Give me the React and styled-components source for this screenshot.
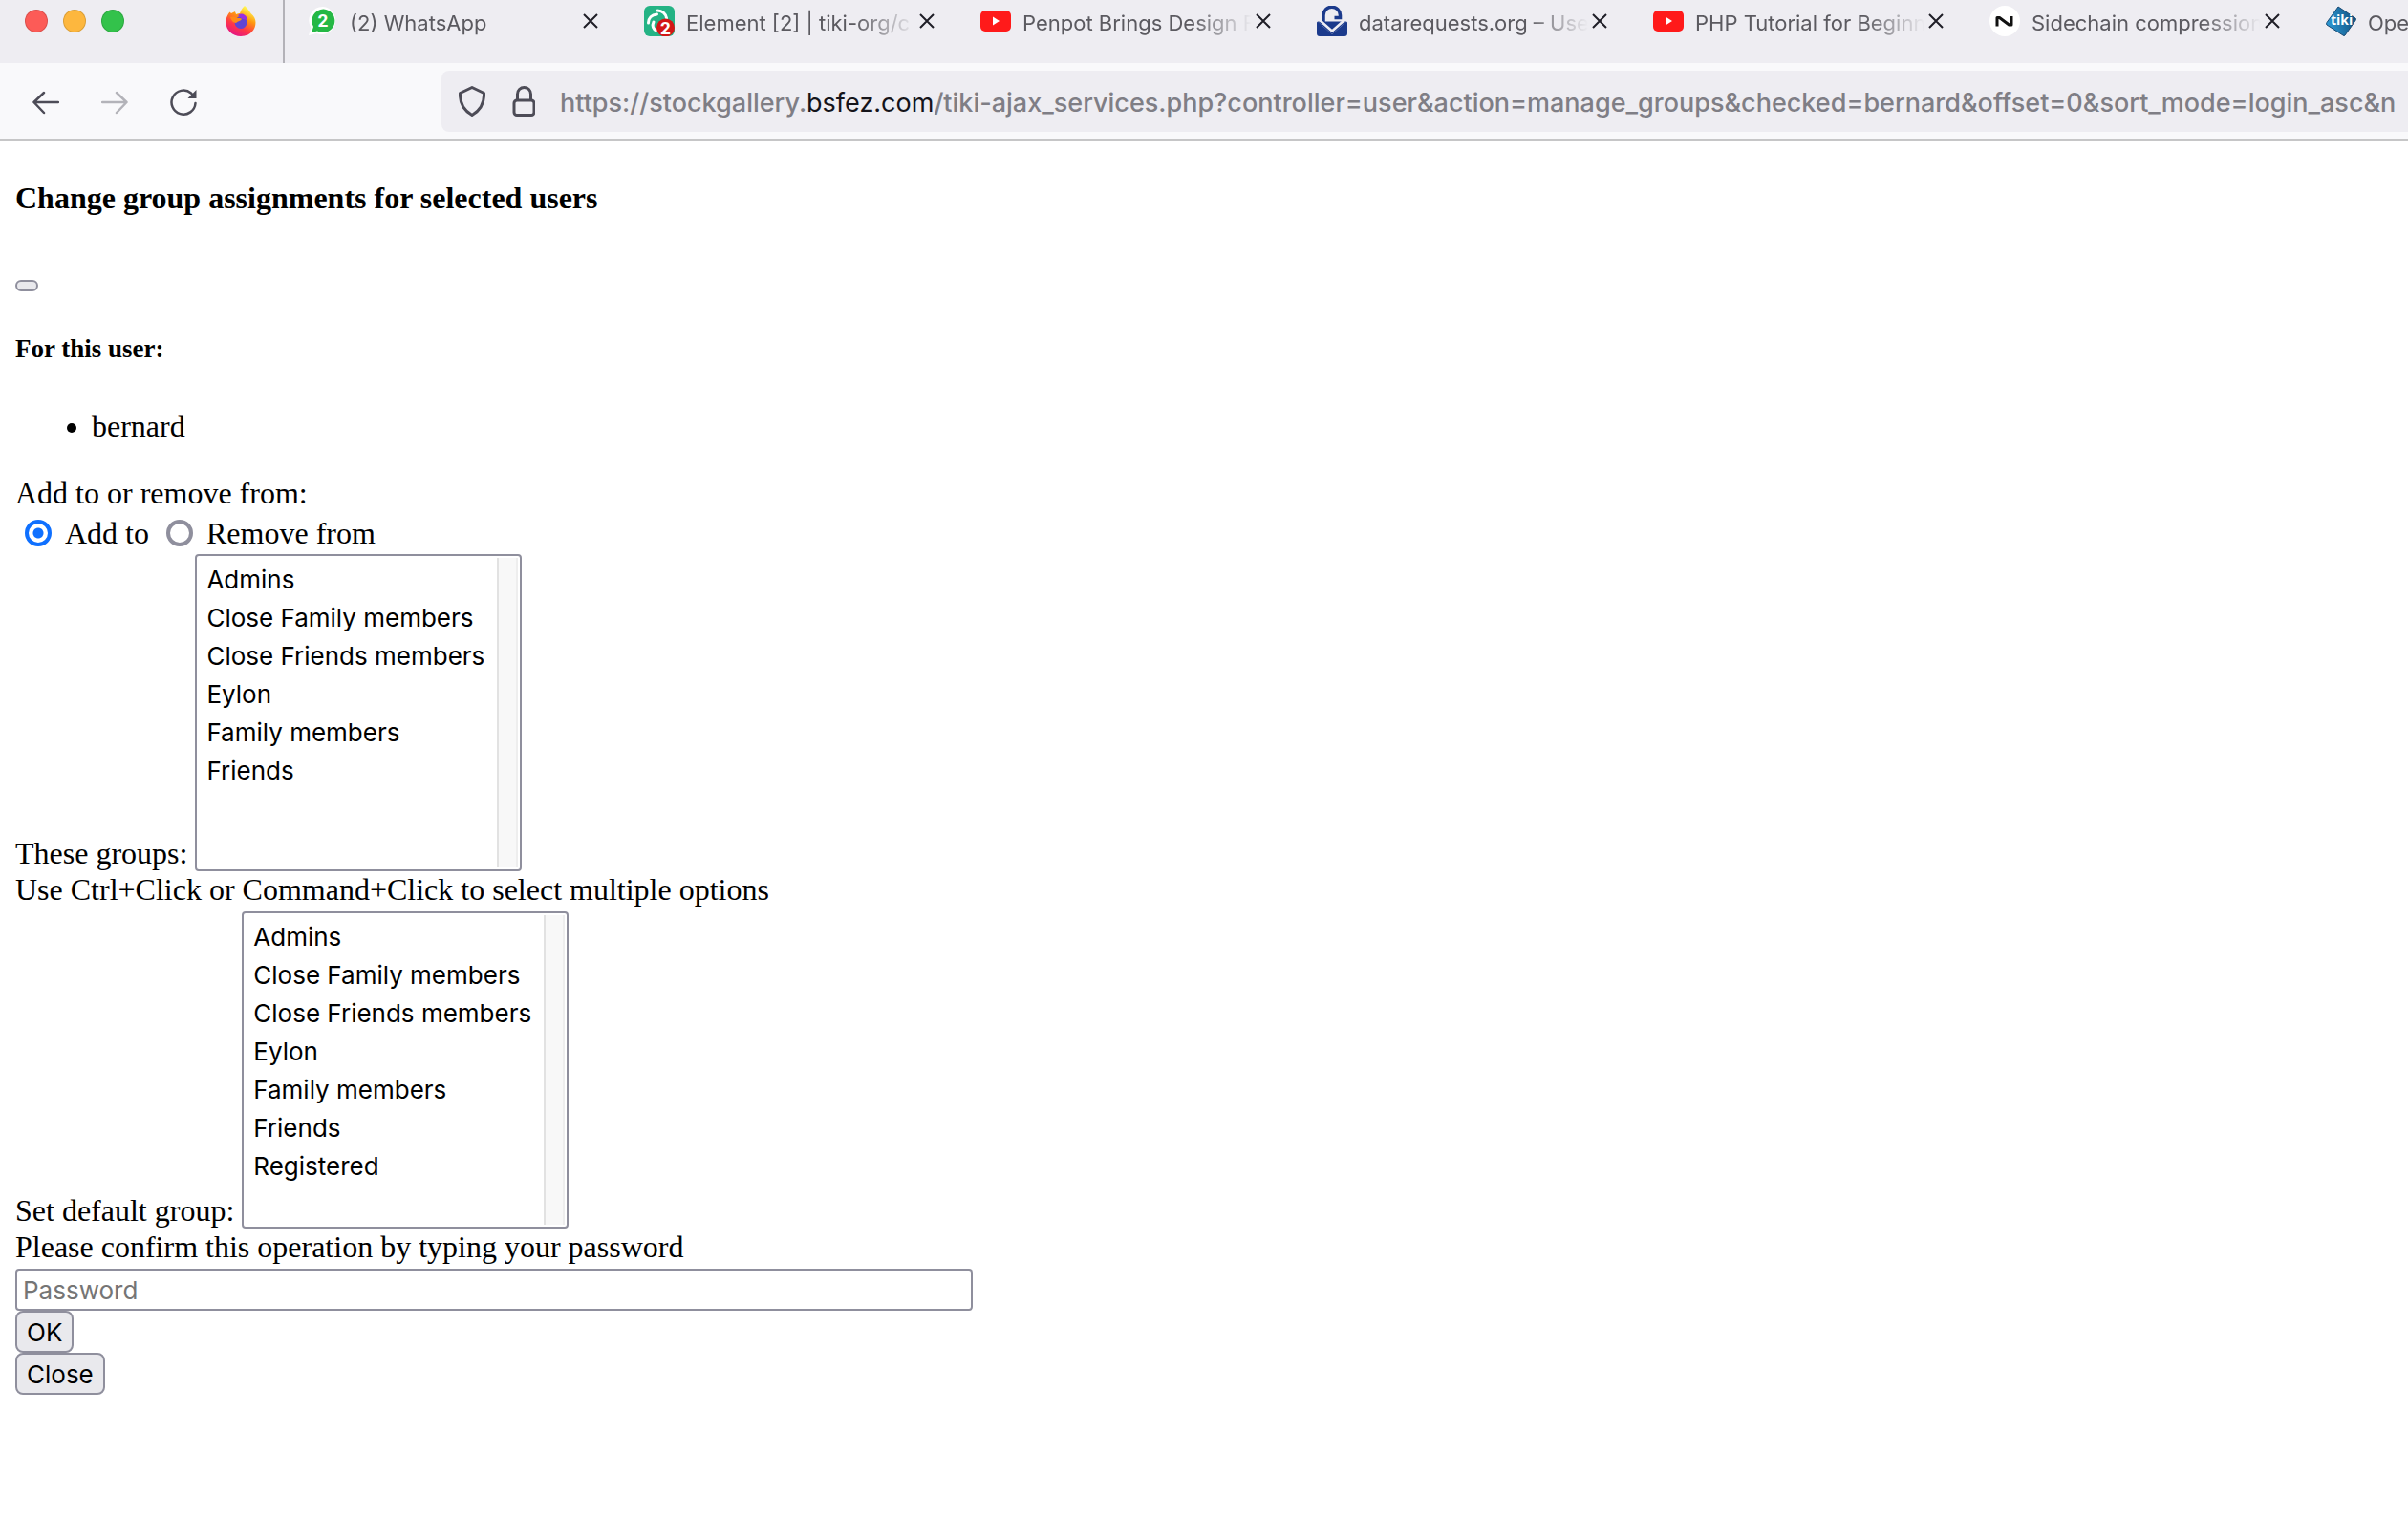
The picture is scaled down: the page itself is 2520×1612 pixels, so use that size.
import React, { useState } from "react";
import styled, { createGlobalStyle } from "styled-components";

const groups = [
  "Admins",
  "Close Family members",
  "Close Friends members",
  "Eylon",
  "Family members",
  "Friends",
];

const YoutubeIcon = () => (
  <Favicon viewBox="0 0 32 32">
    <rect y="5" width="32" height="22" rx="5" fill="#ff1a1a" />
    <path d="M13 11.500v9l7-4.500z" fill="#fff" />
  </Favicon>
);

const WhatsAppIcon = () => (
  <Favicon viewBox="0 0 32 32">
    <path
      d="M16 1A14.500 14.500 0 0 0 3.500 23L1 31l8.500-2A14.500 14.500 0 1 0 16 1z"
      fill="#fff"
    />
    <path
      d="M16.500 3.500A12.300 12.300 0 0 0 6 22L4 28l6-1.500A12.300 12.300 0 1 0 16.500 3.500z"
      fill="#25b845"
    />
    <Badge x="16" y="22">
      2
    </Badge>
  </Favicon>
);

const ElementIcon = () => (
  <Favicon viewBox="0 0 32 32">
    <rect width="32" height="32" rx="6" fill="#24b385" />
    <g fill="none" stroke="#fff" strokeWidth="3" strokeLinecap="round">
      <path d="M14 5c5 0 9 3.500 9.500 8" />
      <path d="M4.500 18c0-5 3.500-8.500 9-9" />
      <path d="M13 26c-3.500-1.500-5-5-3-9" />
    </g>
    <circle cx="22.500" cy="23" r="9.500" fill="#d31616" />
    <Badge x="22.500" y="30">
      2
    </Badge>
  </Favicon>
);

const PadlockIcon = () => (
  <Favicon viewBox="0 0 32 32">
    <path
      d="M7 20V10a8.500 8.500 0 0 1 17.500 0v2.500h-6"
      fill="none"
      stroke="#1b3a8c"
      strokeWidth="3.500"
    />
    <path
      d="M1 16.500L16 30l15-13.500 1 1V29a3 3 0 0 1-3 3H3a3 3 0 0 1-3-3V17.500z"
      fill="#1b3a8c"
    />
    <path d="M1 16.500h30L16 30z" fill="#1b3a8c" />
    <path d="M3 15l13 11.500L29 15" fill="none" stroke="#eeedf2" strokeWidth="2.500" />
  </Favicon>
);

const NativeIcon = () => (
  <Favicon viewBox="0 0 32 32">
    <circle cx="16" cy="16" r="16" fill="#fff" />
    <path
      d="M8 21.500V12.500h2.500l10 7.500H23v-9"
      fill="none"
      stroke="#111"
      strokeWidth="3"
      strokeLinejoin="round"
    />
  </Favicon>
);

const TikiIcon = () => (
  <Favicon viewBox="0 0 32 32">
    <defs>
      <linearGradient id="tiki" x1="0" y1="0.600" x2="1" y2="0.400">
        <stop offset="0" stopColor="#2d9ad6" />
        <stop offset="1" stopColor="#12517f" />
      </linearGradient>
    </defs>
    <path
      d="M13 1l18 12q1 1 0 2.500L20 31q-1 1-2 0L1 20q-1-1 0-2.500z"
      fill="url(#tiki)"
      stroke="#1a4a73"
      strokeWidth="1"
    />
    <TikiText x="5" y="20">
      tiki
    </TikiText>
  </Favicon>
);

const FirefoxIcon = () => (
  <Favicon viewBox="0 0 32 32">
    <defs>
      <linearGradient id="ff" x1="0.800" y1="0" x2="0.300" y2="1">
        <stop offset="0.100" stopColor="#fff44f" />
        <stop offset="0.400" stopColor="#ff980e" />
        <stop offset="0.700" stopColor="#ff3647" />
        <stop offset="1" stopColor="#e31587" />
      </linearGradient>
    </defs>
    <path
      d="M20 0c3 3 5 5 6.500 8 3.500 3 5 6 5 9.500C31.500 26 25 32 16 32S.5 25.500.5 17.500C.5 12 2.500 9 4.500 6.500L6 8l4-2c0 1 1 2 1 3 2-1 3-1 4-1 1-3 2-5 5-8z"
      fill="url(#ff)"
    />
    <circle cx="16" cy="17.500" r="6.500" fill="#5f45d2" />
    <path d="M13 10c4-3 9-1 10 5l-5-1z" fill="#9a2fe0" />
    <path d="M5 12c3-1 6 0 8 1 2 0 4 0 4 1-1 2-4 2-6 4-3 0-5-3-6-6z" fill="#ff8a16" />
  </Favicon>
);

const tabs = [
  { title: "(2) WhatsApp", Icon: WhatsAppIcon },
  { title: "Element [2] | tiki-org/c", Icon: ElementIcon },
  { title: "Penpot Brings Design F", Icon: YoutubeIcon },
  { title: "datarequests.org – Use", Icon: PadlockIcon },
  { title: "PHP Tutorial for Beginn", Icon: YoutubeIcon },
  { title: "Sidechain compression", Icon: NativeIcon },
  { title: "Ope", Icon: TikiIcon },
];

const GroupSelect = ({ id, label, options, value, onChange }) => (
  <SelectRow>
    <label htmlFor={id}>{label}</label>
    <ListBox id={id} multiple size={8} value={value} onChange={onChange}>
      {options.map((it) => (
        <option key={it}>{it}</option>
      ))}
    </ListBox>
  </SelectRow>
);

const selectedValues = (e) =>
  Array.from(e.target.selectedOptions).map((o) => o.value);

export default () => {
  const [mode, setMode] = useState("add");
  const [picked, setPicked] = useState([]);
  const [defaultGroup, setDefaultGroup] = useState([]);

  return (
    <>
      <GlobalStyle />
      <TabStrip>
        <WindowControls>
          <Light color="#fc5b57" />
          <Light color="#fdb73e" />
          <Light color="#33c24b" />
        </WindowControls>
        <PinnedTab>
          <FirefoxIcon />
        </PinnedTab>
        <Tabs>
          {tabs.map(({ title, Icon }) => (
            <Tab key={title}>
              <Icon />
              <TabTitle>{title}</TabTitle>
              <TabClose aria-label={"Close " + title}>
                <svg viewBox="0 0 16 16" width="16" height="16">
                  <path d="M1 1l14 14M15 1L1 15" stroke="#1f1e27" strokeWidth="2" />
                </svg>
              </TabClose>
            </Tab>
          ))}
        </Tabs>
      </TabStrip>
      <Toolbar>
        <NavButton aria-label="Back">
          <svg viewBox="0 0 28 28">
            <path d="M27 14H2M12 4L1.500 14 12 25" />
          </svg>
        </NavButton>
        <NavButton aria-label="Forward" disabled>
          <svg viewBox="0 0 28 28">
            <path d="M1 14h25M16 4l10.500 10L16 25" />
          </svg>
        </NavButton>
        <NavButton aria-label="Reload">
          <svg viewBox="0 0 28 28">
            <path d="M26.500 15A12.500 12.500 0 1 1 22 4.500l2 2.500" />
            <path d="M27.500 1v9h-9z" fill="#4d4c57" stroke="none" />
          </svg>
        </NavButton>
        <UrlBar>
          <UrlIcon width="28" viewBox="0 0 28 32">
            <path d="M14 1.500L26.500 7.500C27 18 22 26 14 30.500 6 26 1 18 1.500 7.500z" />
          </UrlIcon>
          <UrlIcon width="26" viewBox="0 0 26 32">
            <rect x="4" y="15" width="21" height="15.500" rx="3" />
            <path d="M7.500 15V8.500a7 7 0 0 1 14 0V15" />
          </UrlIcon>
          <Url>
            https://stockgallery.<b>bsfez.com</b>
            /tiki-ajax_services.php?controller=user&amp;action=manage_groups&amp;checked=bernard&amp;offset=0&amp;sort_mode=login_asc&amp;n
          </Url>
        </UrlBar>
      </Toolbar>
      <Page>
        <Title>Change group assignments for selected users</Title>
        <EmptyButton type="button" aria-label="Dismiss" />
        <Subtitle>For this user:</Subtitle>
        <UserList>
          <li>bernard</li>
        </UserList>
        <form onSubmit={(e) => e.preventDefault()}>
          <div>Add to or remove from:</div>
          <RadioRow>
            <RadioLabel>
              <Radio
                name="mode"
                checked={mode === "add"}
                onChange={() => setMode("add")}
              />
              Add to
            </RadioLabel>
            <RadioLabel>
              <Radio
                name="mode"
                checked={mode === "remove"}
                onChange={() => setMode("remove")}
              />
              Remove from
            </RadioLabel>
          </RadioRow>
          <GroupSelect
            id="groups"
            label="These groups:"
            options={groups}
            value={picked}
            onChange={(e) => setPicked(selectedValues(e))}
          />
          <Hint>Use Ctrl+Click or Command+Click to select multiple options</Hint>
          <GroupSelect
            id="default-group"
            label="Set default group:"
            options={[...groups, "Registered"]}
            value={defaultGroup}
            onChange={(e) => setDefaultGroup(selectedValues(e))}
          />
          <Hint as="label" htmlFor="password">
            Please confirm this operation by typing your password
          </Hint>
          <Password id="password" placeholder="Password" />
          <Button type="submit">OK</Button>
        </form>
        <Button type="button">Close</Button>
      </Page>
    </>
  );
};

const GlobalStyle = createGlobalStyle`
  * {
    box-sizing: border-box;
  }
  body {
    margin: 0;
    background-color: #fff;
  }
  button {
    cursor: pointer;
  }
`;

const TabStrip = styled.header`
  display: flex;
  height: 66px;
  overflow: hidden;
  background-color: #eeedf2;
`;

const WindowControls = styled.div`
  display: flex;
  gap: 16px;
  padding: 10px 0 0 26px;
`;

const Light = styled.span`
  width: 24px;
  height: 24px;
  border: 1px solid #0002;
  border-radius: 50%;
  background-color: ${(props) => props.color};
`;

const PinnedTab = styled.div`
  padding: 6px 28px 0 106px;
  border-right: 2px solid #b3b2b8;
`;

const Tabs = styled.div`
  display: flex;
  padding-left: 24px;
`;

const Tab = styled.div`
  display: flex;
  flex: none;
  align-items: center;
  width: 352px;
  height: 44px;
  padding-right: 48px;
`;

const Favicon = styled.svg`
  display: block;
  flex: none;
  width: 32px;
  height: 32px;
`;

const Badge = styled.text`
  fill: #fff;
  font-family: Roboto, sans-serif;
  font-size: 19px;
  font-weight: 700;
  text-anchor: middle;
`;

const TikiText = styled.text`
  fill: #fff;
  font-family: "Open Sans", sans-serif;
  font-size: 14px;
  font-weight: 700;
`;

const TabTitle = styled.span`
  flex: 1;
  margin: 4px 4px 0 12px;
  overflow: hidden;
  color: #5b5a60;
  font-family: Inter, sans-serif;
  font-size: 22px;
  line-height: 28px;
  white-space: nowrap;
  mask-image: linear-gradient(to left, transparent, #000 64px);
`;

const TabClose = styled.button`
  display: flex;
  padding: 0;
  border: 0;
  background: none;
`;

const Toolbar = styled.nav`
  display: flex;
  align-items: center;
  height: 82px;
  padding-left: 34px;
  border-bottom: 2px solid #c6c6c7;
  background-color: #f9f9fb;
`;

const NavButton = styled.button`
  width: 28px;
  height: 28px;
  margin: 2px 44px 0 0;
  padding: 0;
  border: 0;
  background: none;
  opacity: ${(props) => (props.disabled ? 0.4 : 1)};

  svg {
    display: block;
    fill: none;
    stroke: #4d4c57;
    stroke-width: 2.5;
    stroke-linecap: round;
    stroke-linejoin: round;
  }
`;

const UrlBar = styled.div`
  display: flex;
  flex: 1;
  align-items: center;
  min-width: 0;
  height: 64px;
  margin-left: 212px;
  padding-left: 18px;
  overflow: hidden;
  border-radius: 8px 0 0 8px;
  background-color: #eeedf2;
`;

const UrlIcon = styled.svg`
  flex: none;
  height: 32px;
  margin-right: 26px;
  fill: none;
  stroke: #4d4c57;
  stroke-width: 3;
  stroke-linejoin: round;
`;

const Url = styled.span`
  margin-top: 4px;
  color: #7f7e85;
  font-family: Inter, sans-serif;
  font-size: 27px;
  font-weight: 500;
  line-height: 36px;
  white-space: nowrap;

  b {
    color: #15141a;
    font-weight: 400;
  }
`;

const Page = styled.main`
  padding: 41px 16px;
  color: #000;
  font-family: "Liberation Serif", serif;
  font-size: 32px;
  line-height: 38px;
`;

const Title = styled.h4`
  margin: 0 0 68px;
  font-size: 32px;
  line-height: 36px;
`;

const Subtitle = styled.h5`
  margin: 45px 0 47px;
  font-size: 27px;
  line-height: 30px;
`;

const UserList = styled.ul`
  margin: 0 0 32px;
  padding-left: 80px;
`;

const RadioRow = styled.div`
  display: flex;
  align-items: center;
  gap: 18px;
  height: 45px;
  padding-left: 10px;
`;

const RadioLabel = styled.label`
  display: flex;
  align-items: center;
  gap: 14px;
`;

const Radio = styled.input.attrs({ type: "radio" })`
  appearance: none;
  width: 28px;
  height: 28px;
  margin: 0;
  border: 4px solid #8f8f9d;
  border-radius: 50%;

  &:checked {
    border-color: #0f70ff;
    background: radial-gradient(circle, #0f70ff 5px, #fff 6px);
  }
`;

const SelectRow = styled.div`
  display: flex;
  align-items: flex-end;
  gap: 8px;
`;

const ListBox = styled.select`
  width: 342px;
  height: 332px;
  padding: 9px 26px 4px 2px;
  overflow: hidden;
  border: 2px solid #8f8f9d;
  border-radius: 4px;
  outline: none;
  background: linear-gradient(to right, #e2e2e2 2px, #f8f8f8 2px 20px, #eee 20px)
    right 2px top 2px / 22px 324px no-repeat #fff;
  color: #000;
  font-family: Inter, sans-serif;
  font-size: 26px;

  option {
    min-height: 40px;
    padding: 0 8px;
    line-height: 40px;
  }
`;

const Hint = styled.div`
  display: block;
  padding-bottom: 4px;
`;

const Password = styled.input.attrs({ type: "password" })`
  display: block;
  width: 1002px;
  max-width: 100%;
  height: 44px;
  padding: 0 6px;
  border: 2px solid #8f8f9d;
  border-radius: 4px;
  font-family: Inter, sans-serif;
  font-size: 26px;

  &::placeholder {
    color: #757575;
  }
`;

const Button = styled.button`
  display: block;
  height: 44px;
  padding: 0 10px;
  border: 2px solid #8f8f9d;
  border-radius: 8px;
  background-color: #e9e9ed;
  color: #000;
  font-family: Inter, sans-serif;
  font-size: 26px;
`;

const EmptyButton = styled(Button)`
  width: 24px;
  height: 12px;
  border-radius: 6px;
`;
